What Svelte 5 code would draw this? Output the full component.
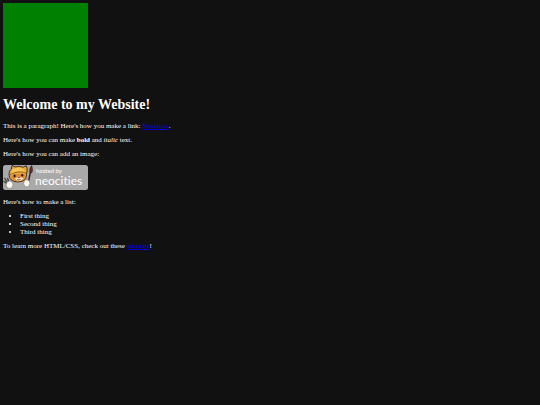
<svelte:head>
  <title>My Website</title>
</svelte:head>

<script>
  const things = ['First thing', 'Second thing', 'Third thing'];
</script>

<main>
  <div class="square"></div>

  <h1>Welcome to my Website!</h1>

  <p>This is a paragraph! Here's how you make a link: <a href="#neocities">Neocities</a>.</p>
  <p>Here's how you can make <strong>bold</strong> and <em>italic</em> text.</p>
  <p>Here's how you can add an image:</p>

  <svg class="badge" viewBox="0 0 85 25" role="img" aria-label="Hosted by Neocities">
    <rect width="85" height="25" rx="2.5" fill="#a9a9a9" />
    <!-- paintbrush -->
    <path d="M25.4 17 27.6 6.5" stroke="#3b2420" stroke-width="1.4" />
    <path d="M26.8 7.5C26.2 4.5 27.2 2 28.6 .6 29.7 3 29.8 6 28.8 7.8Z" fill="#702a26" stroke="#241615" stroke-width=".5" />
    <!-- wrench -->
    <path d="M1.5 13 6.5 21M.5 16 5 19.5M4.5 13 6 18" stroke="#3c4144" stroke-width="1.3" fill="none" />
    <!-- head with helmet -->
    <path d="M6.2 10.8C5.6 7 7 5 8.3 4.2L9 .5 12.6 2C15 1 18 1.2 19.5 2.3L23.3 .9C24.6 3.8 24.2 7 23.4 9.2 23.6 14.2 20.7 16.6 15.6 16.8 10.4 17 6.7 15 6.2 10.8Z" fill="#e7a53a" stroke="#37210e" stroke-width=".9" />
    <path d="M9 5C11.5 2.2 17 1.8 21 4.4L22 7.2C17.8 5.4 12.5 6 8.2 8.6Z" fill="#f2c652" />
    <path d="M7 9.9C11.5 6.8 18.5 6 23 8.2" fill="none" stroke="#9b6420" stroke-width=".9" />
    <path d="M7.4 11.5C10.2 9 20 8 22.6 10 22 14 19.5 16 15.6 16.2 12 16.2 8.4 14.9 7.4 11.5Z" fill="#e38d30" />
    <path d="M11.8 13.8C13.8 11.8 18.2 11.6 20.4 13.2 19.3 16 14 16.8 11.8 13.8Z" fill="#f9ead0" />
    <ellipse cx="11.6" cy="11" rx="1.1" ry="1.4" fill="#2a1712" />
    <ellipse cx="19.2" cy="10.3" rx="1.1" ry="1.4" fill="#2a1712" />
    <path d="M14.8 12.2h2.4L16 13.5Z" fill="#482015" />
    <path d="M14 14.3C15 15 17 15 18 14" fill="none" stroke="#5d2c1c" stroke-width=".6" />
    <!-- paws -->
    <ellipse cx="6.6" cy="19.8" rx="3.4" ry="3.7" fill="#faf7ef" stroke="#6f6256" stroke-width=".5" />
    <ellipse cx="23.8" cy="18.3" rx="3.1" ry="3.6" fill="#faf7ef" stroke="#6f6256" stroke-width=".5" />
    <text class="hosted" x="33" y="8">hosted by</text>
    <text class="name" x="32" y="20">neocities</text>
  </svg>

  <p>Here's how to make a list:</p>

  <ul>
    {#each things as thing}
      <li>{thing}</li>
    {/each}
  </ul>

  <p>To learn more HTML/CSS, check out these <a href="#tutorials">tutorials</a>!</p>
</main>

<style>
  :global(body) {
    margin: 0;
    background: #111;
  }

  main {
    display: flow-root;
    padding: 3px;
    color: #fff;
    font: 7px/8px "Liberation Serif", "Times New Roman", serif;
  }

  .square {
    width: 85px;
    height: 85px;
    background: green;
  }

  h1 {
    margin: 9px 0;
    font-size: 14px;
    line-height: 16px;
  }

  p {
    margin: 6px 0;
  }

  a {
    color: #00e;
  }

  .badge {
    display: block;
    width: 85px;
    height: 25px;
    margin: 7px 0 8px;
  }

  .hosted,
  .name {
    fill: #fff;
    font-family: Lato, "Open Sans", sans-serif;
    font-variant-ligatures: none;
  }

  .hosted {
    font-size: 6px;
  }

  .name {
    font-size: 12px;
  }

  ul {
    margin: 6px 0;
    padding-left: 17px;
  }
</style>
